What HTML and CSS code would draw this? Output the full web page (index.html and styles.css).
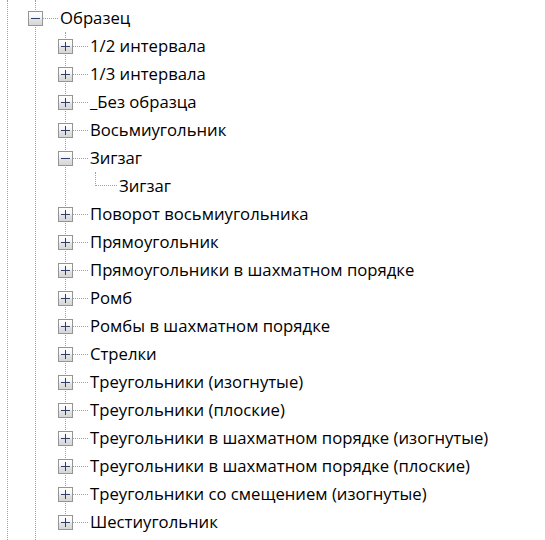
FILE: index.html
```html
<!DOCTYPE html>
<html lang="ru">
<head>
<meta charset="utf-8">
<title>Образец</title>
<link rel="stylesheet" href="styles.css">
</head>
<body>
<div class="tree">
  <div class="node lvl0">
    <div class="row"><span class="exp minus"></span><span class="conn"></span><span class="label">Образец</span></div>
    <ul class="children">
      <li class="node lvl1"><div class="row"><span class="exp plus"></span><span class="conn"></span><span class="label">1/2 интервала</span></div></li>
      <li class="node lvl1"><div class="row"><span class="exp plus"></span><span class="conn"></span><span class="label">1/3 интервала</span></div></li>
      <li class="node lvl1"><div class="row"><span class="exp plus"></span><span class="conn"></span><span class="label">_Без образца</span></div></li>
      <li class="node lvl1"><div class="row"><span class="exp plus"></span><span class="conn"></span><span class="label">Восьмиугольник</span></div></li>
      <li class="node lvl1">
        <div class="row"><span class="exp minus"></span><span class="conn"></span><span class="label">Зигзаг</span></div>
        <ul class="leaves">
          <li class="node lvl2"><div class="row"><span class="elbow"></span><span class="label">Зигзаг</span></div></li>
        </ul>
      </li>
      <li class="node lvl1"><div class="row"><span class="exp plus"></span><span class="conn"></span><span class="label">Поворот восьмиугольника</span></div></li>
      <li class="node lvl1"><div class="row"><span class="exp plus"></span><span class="conn"></span><span class="label">Прямоугольник</span></div></li>
      <li class="node lvl1"><div class="row"><span class="exp plus"></span><span class="conn"></span><span class="label">Прямоугольники в шахматном порядке</span></div></li>
      <li class="node lvl1"><div class="row"><span class="exp plus"></span><span class="conn"></span><span class="label">Ромб</span></div></li>
      <li class="node lvl1"><div class="row"><span class="exp plus"></span><span class="conn"></span><span class="label">Ромбы в шахматном порядке</span></div></li>
      <li class="node lvl1"><div class="row"><span class="exp plus"></span><span class="conn"></span><span class="label">Стрелки</span></div></li>
      <li class="node lvl1"><div class="row"><span class="exp plus"></span><span class="conn"></span><span class="label">Треугольники (изогнутые)</span></div></li>
      <li class="node lvl1"><div class="row"><span class="exp plus"></span><span class="conn"></span><span class="label">Треугольники (плоские)</span></div></li>
      <li class="node lvl1"><div class="row"><span class="exp plus"></span><span class="conn"></span><span class="label">Треугольники в шахматном порядке (изогнутые)</span></div></li>
      <li class="node lvl1"><div class="row"><span class="exp plus"></span><span class="conn"></span><span class="label">Треугольники в шахматном порядке (плоские)</span></div></li>
      <li class="node lvl1"><div class="row"><span class="exp plus"></span><span class="conn"></span><span class="label">Треугольники со смещением (изогнутые)</span></div></li>
      <li class="node lvl1"><div class="row"><span class="exp plus"></span><span class="conn"></span><span class="label">Шестиугольник</span></div></li>
    </ul>
  </div>
</div>
</body>
</html>
```
FILE: styles.css
```css
html, body {
  margin: 0;
  padding: 0;
  background: #ffffff;
}
body {
  font-family: "Open Sans", "Noto Sans", "DejaVu Sans", sans-serif;
  font-size: 16.7px;
  color: #000000;
}
.tree {
  position: relative;
  height: 540px;
  padding-top: 4px;
  box-sizing: border-box;
  overflow: hidden;
}
.tree::before,
.tree::after {
  content: "";
  position: absolute;
  top: 0;
  bottom: 0;
  border-left: 1px dotted #a0a0a0;
}
.tree::before { left: 7px; }
.tree::after { left: 35px; }

ul {
  list-style: none;
  margin: 0;
  padding: 0;
}
.children {
  position: relative;
}
.children::before {
  content: "";
  position: absolute;
  left: 65px;
  top: 0;
  bottom: 14px;
  border-left: 1px dotted #a0a0a0;
}
.row {
  display: flex;
  align-items: center;
  height: 28px;
  position: relative;
  white-space: nowrap;
}
.lvl0 > .row { padding-left: 28px; }
.lvl1 > .row { padding-left: 58px; }
.lvl2 > .row { padding-left: 95px; }

.exp {
  position: relative;
  z-index: 1;
  flex: none;
  width: 15px;
  height: 15px;
  box-sizing: border-box;
  border: 1px solid #959595;
  background: linear-gradient(#ffffff 0%, #f6f6f6 40%, #e2e2e2 60%, #d6d6d6 100%);
}
.exp::before {
  content: "";
  position: absolute;
  left: 2px;
  right: 2px;
  top: 6px;
  height: 1px;
  background: #2b4266;
}
.plus::after {
  content: "";
  position: absolute;
  top: 2px;
  bottom: 2px;
  left: 6px;
  width: 1px;
  background: #2b4266;
}
.conn {
  flex: none;
  width: 15px;
  margin-right: 2px;
  border-top: 1px dotted #a0a0a0;
}
.elbow {
  flex: none;
  align-self: flex-start;
  width: 22px;
  height: 14px;
  box-sizing: border-box;
  border-left: 1px dotted #a0a0a0;
  border-bottom: 1px dotted #a0a0a0;
  margin-right: 2px;
}
.label {
  line-height: 28px;
}
```
